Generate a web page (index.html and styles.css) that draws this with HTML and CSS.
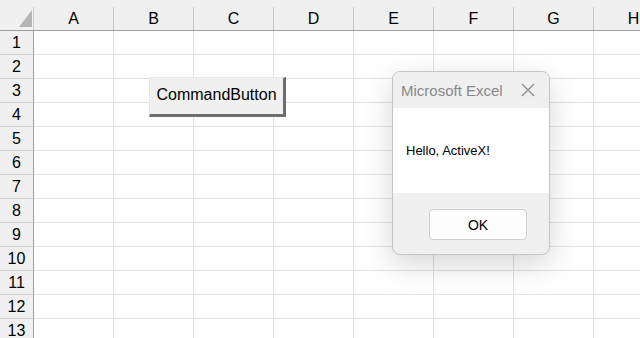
FILE: index.html
```html
<!DOCTYPE html>
<html lang="en">
<head>
    <meta charset="UTF-8">
    <meta name="viewport" content="width=device-width, initial-scale=1.0">
    <title>Microsoft Excel</title>
    <link rel="stylesheet" href="styles.css">
</head>
<body>
    <div id="sheet">
        <div class="col-headers">
            <div class="corner">
                <svg width="13" height="17" viewBox="0 0 13 17"><polygon points="13,0 13,17 0,17" fill="#b5b5b5"/></svg>
            </div>
            <div class="col-head">A</div>
            <div class="col-head">B</div>
            <div class="col-head">C</div>
            <div class="col-head">D</div>
            <div class="col-head">E</div>
            <div class="col-head">F</div>
            <div class="col-head">G</div>
            <div class="col-head">H</div>
        </div>
        <div id="rows"></div>

        <button class="command-button">CommandButton</button>

        <div class="msgbox">
            <div class="msgbox-title">
                <span>Microsoft Excel</span>
                <svg class="close" width="14" height="14" viewBox="0 0 14 14"><path d="M1 1 L13 13 M13 1 L1 13" stroke="#8a8a8a" stroke-width="1.3"/></svg>
            </div>
            <div class="msgbox-body">Hello, ActiveX!</div>
            <div class="msgbox-footer">
                <button class="ok-button">OK</button>
            </div>
        </div>
    </div>

    <script>
        const rows = document.getElementById("rows");
        for (let i = 1; i <= 13; i++) {
            const row = document.createElement("div");
            row.className = "row";
            let html = `<div class="row-head">${i}</div>`;
            for (let c = 0; c < 8; c++) {
                html += `<div class="cell"></div>`;
            }
            row.innerHTML = html;
            rows.appendChild(row);
        }
    </script>
</body>
</html>
```

FILE: styles.css
```css
body {
    margin: 0;
    font-family: "Liberation Sans", Arial, sans-serif;
    background-color: #ffffff;
    overflow: hidden;
}
#sheet {
    position: relative;
    width: 640px;
    height: 338px;
    overflow: hidden;
}
.col-headers {
    display: flex;
    padding-top: 7px;
    height: 23px;
    background-color: #f0f0f0;
    border-bottom: 1px solid #9e9e9e;
}
.corner {
    width: 33px;
    flex-shrink: 0;
    border-right: 1px solid #d0d0d0;
    display: flex;
    justify-content: flex-end;
    align-items: flex-end;
}
.corner svg {
    margin: 0 1px 3px 0;
}
.col-head {
    width: 79px;
    flex-shrink: 0;
    border-right: 1px solid #c8c8c8;
    text-align: center;
    font-size: 16px;
    line-height: 23px;
    color: #000;
}
.row {
    display: flex;
    height: 24px;
}
.row-head {
    width: 33px;
    flex-shrink: 0;
    background-color: #f0f0f0;
    border-right: 1px solid #9e9e9e;
    border-bottom: 1px solid #d0d0d0;
    text-align: center;
    font-size: 16px;
    line-height: 24px;
}
.cell {
    width: 79px;
    flex-shrink: 0;
    border-right: 1px solid #e1e1e1;
    border-bottom: 1px solid #e1e1e1;
}
.command-button {
    position: absolute;
    left: 149px;
    top: 77px;
    width: 137px;
    height: 40px;
    background-color: #f0f0f0;
    border: none;
    border-top: 1px solid #e6e6e6;
    border-left: 1px solid #e6e6e6;
    border-right: 3px solid #6e6e6e;
    border-bottom: 3px solid #6e6e6e;
    font-family: "Liberation Sans", Arial, sans-serif;
    font-size: 16px;
    color: #000;
    padding: 0 0 2px 0;
}
.msgbox {
    position: absolute;
    left: 392px;
    top: 71px;
    width: 156px;
    height: 182px;
    border: 1px solid #c4c4c4;
    border-radius: 8px;
    background-color: #f0f0f0;
    box-shadow: 0 10px 30px rgba(0, 0, 0, 0.16);
    overflow: hidden;
    display: flex;
    flex-direction: column;
}
.msgbox-title {
    height: 36px;
    display: flex;
    align-items: center;
    justify-content: space-between;
    padding: 0 14px 0 8px;
    font-size: 15px;
    color: #888;
    background-color: #f0f0f0;
}
.msgbox-body {
    height: 85px;
    background-color: #fff;
    font-size: 13px;
    color: #000;
    padding-left: 13px;
    line-height: 85px;
}
.msgbox-footer {
    flex: 1;
    display: flex;
    align-items: flex-start;
    padding: 16px 0 0 36px;
}
.ok-button {
    width: 98px;
    height: 31px;
    background-color: #fdfdfd;
    border: 1px solid #d0d0d0;
    border-radius: 4px;
    font-family: "Liberation Sans", Arial, sans-serif;
    font-size: 14px;
    color: #000;
}
```
